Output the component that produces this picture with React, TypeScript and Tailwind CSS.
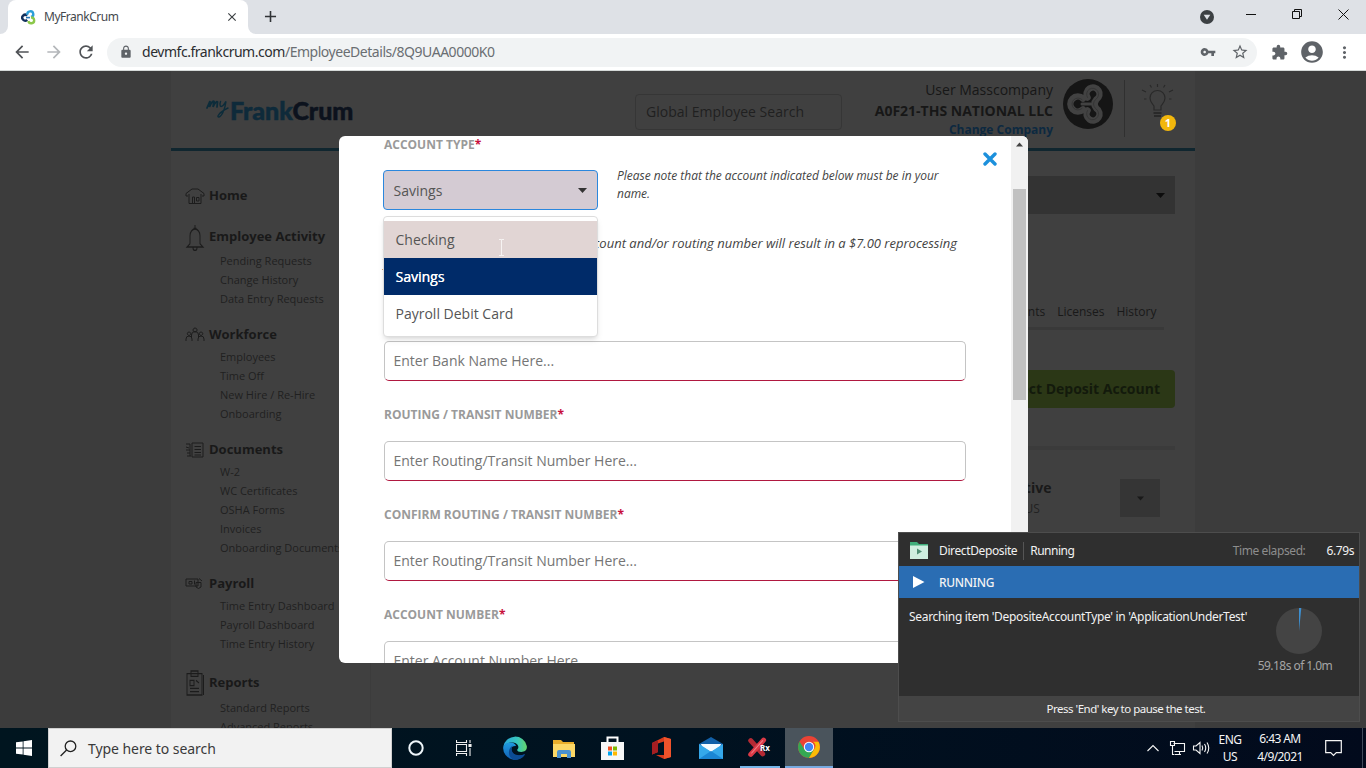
import React from "react";
import {
  MdArrowBack, MdArrowForward, MdRefresh, MdLock, MdVpnKey, MdStarBorder,
  MdExtension, MdAccountCircle, MdMoreVert, MdClose, MdAdd,
} from "react-icons/md";

const OPEN = "font-['Open_Sans','Noto_Sans',sans-serif]";

/* ---------- Browser chrome ---------- */

function Favicon() {
  return (
    <svg width="15" height="15" viewBox="0 0 15 15" fill="none" strokeWidth="2.4">
      <path d="M6.2 5.6A2.9 2.9 0 1 0 6.2 9.8" stroke="#12305c" />
      <path d="M6.5 4.8A2.9 2.9 0 1 1 10 7" stroke="#2c9fd8" />
      <path d="M10 7.5A2.9 2.9 0 1 1 7.4 11" stroke="#8cc84b" />
      <path d="M5 7.6H9" stroke="#2776b8" strokeWidth="1.6" />
    </svg>
  );
}

function TitleBar() {
  return (
    <div className="flex h-[34px] shrink-0 bg-[#dee1e6]">
      <div className="flex w-2 items-end bg-white">
        <div className="h-full w-2 rounded-br-lg bg-[#dee1e6]" />
      </div>
      <div className="flex w-[240px] items-center rounded-t-lg bg-white pl-[13px] pr-[9px]">
        <Favicon />
        <span className="ml-[8px] grow text-[12px] tracking-[-0.48px] text-[#45494d]">MyFrankCrum</span>
        <MdClose size={14} className="text-[#3c4043]" />
      </div>
      <div className="w-2 bg-white">
        <div className="h-full w-2 rounded-bl-lg bg-[#dee1e6]" />
      </div>
      <MdAdd size={19} className="ml-[5px] mt-[7px] text-[#303336]" />
      <div className="grow" />
      <svg width="14" height="14" viewBox="0 0 14 14" className="mr-[32px] mt-[10px]">
        <circle cx="7" cy="7" r="7" fill="#3c4043" />
        <path d="M3.7 4.8h6.6L7 9.8z" fill="#dee1e6" />
      </svg>
      <svg width="120" height="20" viewBox="0 0 120 20" fill="none" stroke="#111" className="mt-[5px]">
        <path d="M0 9.5h10" />
        <path d="M46.500 6.500h7v7h-7zM48.500 6.500v-2h7v7h-2" />
        <path d="M92.500 4.500l10 10M102.500 4.500l-10 10" />
      </svg>
    </div>
  );
}

function Toolbar() {
  return (
    <div className="flex h-[37px] shrink-0 items-center border-b border-[#d5d9d8] bg-white pl-[12px] text-[#5f6368]">
      <MdArrowBack size={20} className="text-[#505357]" />
      <MdArrowForward size={20} className="ml-[12px] text-[#b4b7ba]" />
      <MdRefresh size={20} className="ml-[12px] text-[#505357]" />
      <div className="ml-[11px] flex h-[29px] w-[1150px] items-center rounded-full bg-[#f1f3f4] pl-[12px] pr-[8px]">
        <MdLock size={14} />
        <span className="-mt-px ml-[9px] grow text-[14px] tracking-[-0.47px] text-[#6a6e72]">
          <span className="text-[#2b2d30]">devmfc.frankcrum.com</span>/EmployeeDetails/8Q9UAA0000K0
        </span>
        <MdVpnKey size={16} />
        <MdStarBorder size={18} className="ml-[15px]" />
      </div>
      <MdExtension size={17} className="ml-[14px]" />
      <MdAccountCircle size={26} className="ml-[11px]" />
      <MdMoreVert size={19} className="ml-[10px]" />
    </div>
  );
}

/* ---------- Dimmed page ---------- */

function PageHeader() {
  return (
    <div className="flex h-[80px] shrink-0 border-b-[3px] border-[#10262f]">
      <div className="flex pl-[35px] pt-[24px]">
        <svg width="24" height="26" viewBox="0 0 24 26" fill="none" stroke="#0d2c3a" strokeWidth="1.8" strokeLinecap="round">
          <path d="M1 13L4 6L3.500 12C5 8 7 5.500 8 6.500L7 12C8.500 8 10.500 6 11.500 7L11 12" />
          <path d="M14.500 6.500C13 11 14.500 13 17.500 10L20 6.500C19 14 16 21 13 22C10.500 22.500 12 18 22 13" strokeWidth="1.4" />
        </svg>
        <span className="mt-[-2px] font-['Lato',sans-serif] text-[25px] font-black leading-[34px] tracking-[-0.05px] text-[#0e2a3a] [-webkit-text-stroke:0.5px_currentColor]">
          Frank<span className="text-[#0c121d]">Crum</span>
        </span>
      </div>
      <div className="grow" />
      <div className="mt-[23px] flex h-[36px] w-[207px] items-center rounded-[4px] border border-[#363636] pb-[2px] pl-[10px] text-[14px] tracking-[0.02px] text-[#202020]">
        Global Employee Search
      </div>
      <div className="mt-[8px] w-[211px] text-right text-[14px] leading-[21px] text-[#171717]">
        <div className="tracking-[0px]">User Masscompany</div>
        <div className="font-bold tracking-[0px]">A0F21-THS NATIONAL LLC</div>
        <div className="text-[12px] font-bold leading-[18px] text-[#0d2940]">Change Company</div>
      </div>
      <svg width="50" height="50" viewBox="0 0 50 50" className="ml-[10px] mt-[8px]" fill="none" strokeLinecap="round">
        <circle cx="25" cy="25" r="25" fill="#151515" />
        <path d="M20 19.500A7.500 7.500 0 1 0 20 30.500M24.500 18.500A6.500 6.500 0 1 1 33.500 20.500Q29.500 25 33.500 29.500A6.500 6.500 0 1 1 24.500 31.500" stroke="#424242" strokeWidth="6.500" />
        <path d="M19 20.500A6 6 0 1 0 19 29.500M24.500 18.500A6 6 0 1 1 32.500 20.500Q28.500 25 32.500 29.500A6 6 0 1 1 24.500 31.500" stroke="#353535" strokeWidth="1" />
        <path d="M19 25H28" stroke="#424242" strokeWidth="3" />
      </svg>
      <div className="ml-[11px] mt-[9px] h-[57px] w-px bg-[#303030]" />
      <div className="relative mr-[20px] w-[50px]">
        <svg width="34" height="38" viewBox="0 0 34 38" className="ml-[16px] mt-[12px]" fill="none" stroke="#292929" strokeWidth="1.200">
          <path d="M13 27v-4c-1.500-2.500-4-4-4-8a7.500 7.500 0 0 1 15 0c0 4-2.500 5.500-4 8v4z" />
          <path d="M12.500 30h8M13 33h7" strokeWidth="2" />
          <path d="M16.500 1v3M9 2l1.500 2.500M24 2l-1.500 2.500M1 7l4 2M32 7l-4 2M3 16h2.500M28 16h2.500" />
        </svg>
        <div className="absolute left-[35px] top-[44px] flex size-[16px] items-center justify-center rounded-full bg-[#f2b70c] text-[11px] font-bold text-white">1</div>
      </div>
    </div>
  );
}

const icons: Record<string, React.ReactNode> = {
  Home: <path d="M0 6.500L6 2h6l6 4.500V9h-2M0 6.500V9h2M3 7v9.500h12V7M6.500 16v-6h2v6M10.500 10.500h2.500v3.500h-2.500z" />,
  "Employee Activity": <path d="M9 0v3M7.500 2.500h3M4 14V8a5 5 0 0 1 10 0v6l3 2.500H1L4 14M7 17a2 2 0 0 0 4 0" />,
  Workforce: (
    <path d="M9 2a2 2 0 1 0 .1 0M5.500 12V9a3.500 3.500 0 0 1 7 0v3M3 6a1.700 1.700 0 1 0 .1 0M0 15v-2a3 3 0 0 1 6 0v2M15 6a1.700 1.700 0 1 0 .1 0M12 15v-2a3 3 0 0 1 6 0v2" />
  ),
  Documents: <path d="M6 2h11v14H6zM8.500 5.500H15M8.500 8.500H15M8.500 11.500H15M8.500 14H15M0 3h4M0 6l3 1M0 9h4M1 12h3M1 15h4M4 3v12" />,
  Payroll: <path d="M0 4h12v7H0zM3 6.500h3v2.500H3zM8.500 5.500v4M10 7.500h5v4.500l-2.500 1.500L10 12zM13 3.500l3 2.500" />,
  Reports: <path d="M1 2h15v16H1zM5 0h7v4H5zM17.500 3v15M4 7h4v4H4zM10 7l3 2M4 13h9M4 15.500h9" />,
};

function Section({ title, items = [], className = "" }: { title: string; items?: string[]; className?: string }) {
  return (
    <div className={className}>
      <div className="flex h-[28px] items-center pl-[15px]">
        <svg
          width="18" height={title === "Reports" || title === "Employee Activity" ? 24 : 18}
          viewBox="0 0 18 18" preserveAspectRatio="none" fill="none" stroke="#1c1c1c" className="overflow-visible"
        >
          {icons[title]}
        </svg>
        <span className="ml-[5px] text-[13px] font-bold text-[#191919]">{title}</span>
      </div>
      {items.map((t) => (
        <div key={t} className="h-[19px] whitespace-nowrap pl-[49px] text-[11px] leading-[19px] text-[#202020]">{t}</div>
      ))}
    </div>
  );
}

function Sidebar() {
  return (
    <div className="w-[200px] shrink-0 border-r border-[#3c3c3c] pt-[31px]">
      <Section title="Home" />
      <Section className="mt-[13px]" title="Employee Activity" items={["Pending Requests", "Change History", "Data Entry Requests"]} />
      <Section className="mt-[13px] [&>*:first-child]:-mb-[2px]" title="Workforce" items={["Employees", "Time Off", "New Hire / Re-Hire", "Onboarding"]} />
      <Section className="mt-[13px] [&>*:first-child]:-mb-[2px]" title="Documents" items={["W-2", "WC Certificates", "OSHA Forms", "Invoices", "Onboarding Documents"]} />
      <Section className="mt-[13px] [&>*:first-child]:-mb-[2px]" title="Payroll" items={["Time Entry Dashboard", "Payroll Dashboard", "Time Entry History"]} />
      <Section className="mt-[16px] [&>*:first-child]:mb-[1px]" title="Reports" items={["Standard Reports", "Advanced Reports"]} />
    </div>
  );
}

function Caret({ className = "w-[9px]" }: { className?: string }) {
  return (
    <svg height="5" viewBox="0 0 9 5" className={className}>
      <path d="M0 0h9L4.500 5z" fill="currentColor" />
    </svg>
  );
}

function Details() {
  return (
    <div className="flex grow flex-col items-end pr-[20px] pt-[25px] text-[#191919]">
      <div className="flex h-[38px] w-[780px] items-center justify-end bg-[#333] pr-[10px]">
        <Caret className="w-[9px] text-[#0c0c0c]" />
      </div>
      <div className="mr-[11px] mt-[88px] flex h-[28px] w-[769px] justify-end gap-[12px] border-b-[3px] border-[#393939] pr-[7.500px] text-[12px] leading-[20px]">
        <span>Documents</span><span>Licenses</span><span>History</span>
      </div>
      <div className="mt-[40px] flex h-[38px] items-center rounded-[4px] bg-[#2b3716] pb-px pl-[20px] pr-[15px] text-[14px] font-bold text-[#131a0c]">
        Add Direct Deposit Account
      </div>
      <div className="mt-[38px] h-[4px] w-[780px] bg-[#3b3b3b]" />
      <div className="mt-[27px] flex w-full items-center justify-end pr-[15px]">
        <div className="w-[96px] text-left leading-[21px]">
          <div className="pl-[11px] text-[14px] font-bold">Active</div>
          <div className="text-[12px] text-[#222]">STATUS</div>
        </div>
        <div className="ml-[27px] flex h-[38px] w-[40px] items-center justify-center bg-[#353535]">
          <Caret className="w-[7px]" />
        </div>
      </div>
    </div>
  );
}

/* ---------- Dialog ---------- */

function Label({ children, className = "" }: { children: string; className?: string }) {
  return (
    <div className={`h-[18px] shrink-0 text-[12px] font-bold leading-[20px] text-[#9a9a9a] ${className}`}>
      {children}<span className="text-[#c8103c]">*</span>
    </div>
  );
}

function Field({ placeholder }: { placeholder: string }) {
  return (
    <div className="flex h-[40px] w-[582px] shrink-0 items-center rounded-[5px] border border-[#c4c4c4] border-b-[#b01840] pb-[2px] pl-[8.500px] text-[14px] text-[#757575]">
      {placeholder}
    </div>
  );
}

function Dialog() {
  return (
    <div className="absolute left-[339px] top-[136px] flex h-[527px] w-[689px] overflow-hidden rounded-[6px] bg-white">
      <div className="flex grow flex-col pl-[45px]">
        <Label className="-mt-px">ACCOUNT TYPE</Label>
        <div className="mt-[17px] flex shrink-0">
          <div className="relative -ml-px h-[40px] w-[215px] shrink-0">
            <div className="flex h-full items-center justify-between rounded-[4px] border border-[#2b87dd] bg-[#d4cbd3] pl-[9.500px] pr-[10px] text-[14px] text-[#555]">
              Savings
              <Caret className="w-[9px] text-[#333]" />
            </div>
            <div className="absolute left-0 top-[46px] z-10 h-[121px] w-[215px] rounded-[4px] border border-[#ddd] bg-white pt-[4px] text-[14px] leading-[37px] text-[#555] shadow-md">
              <div className="flex h-[37px] items-center bg-[#e1d5d4] pl-[11.500px]">
                Checking
                <svg width="7" height="17" viewBox="0 0 7 17" className="ml-[43px] mt-[16px]" fill="none" stroke="#fff">
                  <path d="M1 .5h2.500M3.500 .5H6M3.500 1v15M1 16.500h5" opacity=".7" />
                </svg>
              </div>
              <div className="h-[37px] bg-[#002b69] pl-[11.500px] text-white [text-shadow:0.3px_0_0_white]">Savings</div>
              <div className="h-[37px] pl-[11.500px]">Payroll Debit Card</div>
            </div>
          </div>
          <p className="ml-[19px] mt-[-3px] w-[345px] text-[12px] italic leading-[18px] tracking-[-0.02px] text-[#444]">
            Please note that the account indicated below must be in your name.
          </p>
        </div>
        <div className="mt-[23px] h-[48px] w-[573px] shrink-0 text-[13px] italic leading-[21px] text-[#444]">
          <div className="text-right">account and/or routing number will result in a $7.00 reprocessing</div>
          <div className="-mt-[2px]">fee.</div>
        </div>
        <div className="mt-[60px] shrink-0"><Field placeholder="Enter Bank Name Here..." /></div>
        <Label className="mb-[18px] mt-[24px]">ROUTING / TRANSIT NUMBER</Label>
        <Field placeholder="Enter Routing/Transit Number Here..." />
        <Label className="mb-[18px] mt-[24px]">CONFIRM ROUTING / TRANSIT NUMBER</Label>
        <Field placeholder="Enter Routing/Transit Number Here..." />
        <Label className="mb-[18px] mt-[24px]">ACCOUNT NUMBER</Label>
        <Field placeholder="Enter Account Number Here..." />
      </div>
      <svg width="14" height="14" viewBox="0 0 14 14" className="absolute left-[644px] top-[15.500px]" stroke="#1c90dc" strokeWidth="3.400" strokeLinecap="round">
        <path d="M2 2l10 10M12 2L2 12" />
      </svg>
      <div className="flex w-[17px] shrink-0 flex-col items-center bg-[#f1f1f1]">
        <Caret className="mt-[6px] w-[7px] rotate-180 text-[#444]" />
        <div className="mt-[42px] h-[211px] w-[13px] bg-[#c1c1c1]" />
      </div>
    </div>
  );
}

/* ---------- Test runner overlay ---------- */

function Runner() {
  return (
    <div className="absolute left-[898px] top-[532px] flex h-[190px] w-[462px] flex-col border border-[#4d4d4d] bg-[#2f2f2f] font-['Noto_Sans',sans-serif] text-[12px] text-[#f2f2f2]">
      <div className="flex h-[33px] items-center pl-[11px] pr-[5px] pt-[2px]">
        <svg width="18" height="17" viewBox="0 0 18 17">
          <path d="M0 0h7l2 2h9v15H0z" fill="#3fae7b" />
          <path d="M0 3.500h18V17H0z" fill="#cfeee0" />
          <path d="M7 6.500v6l5-3z" fill="#4f8f75" />
        </svg>
        <span className="ml-[11px] tracking-[-0.38px]">DirectDeposite</span>
        <div className="ml-[6px] h-[18px] w-px bg-[#555]" />
        <span className="ml-[6px] tracking-[-0.5px]">Running</span>
        <span className="ml-auto tracking-[-0.4px] text-[#8d8d8d]">Time elapsed:</span>
        <span className="ml-[21px] tracking-[-0.4px]">6.79s</span>
      </div>
      <div className="flex h-[32px] items-center bg-[#2a6db3] pl-[14px]">
        <svg width="12" height="12" viewBox="0 0 12 12"><path d="M0 0l11.500 6L0 12z" fill="#fff" /></svg>
        <span className="ml-[14px] pt-[2px] font-medium tracking-[-0.3px]">RUNNING</span>
      </div>
      <div className="flex h-[98px] justify-between pl-[10px] pr-[22px] pt-[10px]">
        <span className="tracking-[-0.32px]">Searching item 'DepositeAccountType' in 'ApplicationUnderTest'</span>
        <div className="flex w-[76px] flex-col items-center">
          <svg width="46" height="46" viewBox="0 0 46 46">
            <circle cx="23" cy="23" r="23" fill="#444" />
            <path d="M23 23V0h2.300z" fill="#3d8fd0" />
          </svg>
          <span className="-ml-[8px] mt-[3px] whitespace-nowrap tracking-[-0.55px] text-[#a5a5a5]">59.18s of 1.0m</span>
        </div>
      </div>
      <div className="flex grow items-center justify-center bg-[#444] pr-[6px] text-[11.500px] tracking-[-0.5px]">Press 'End' key to pause the test.</div>
    </div>
  );
}

/* ---------- Taskbar ---------- */

function Taskbar() {
  return (
    <div className="flex h-[40px] shrink-0 bg-gradient-to-r from-[#00151f] via-[#001220] to-[#020a1c] font-['Noto_Sans',sans-serif]">
      <div className="flex w-[48px] items-center justify-center">
        <svg width="16" height="16" viewBox="0 0 16 16" fill="#fff">
          <path d="M0 2.300L6.700 1.400V7.600H0zM7.500 1.200L16 0V7.600H7.500zM0 8.400h6.700v6.200L0 13.700zM7.500 8.400H16V16l-8.500-1.200z" />
        </svg>
      </div>
      <div className="flex w-[344px] items-center border border-[#d0d0d0] bg-[#f2f2f2] pl-[11px]">
        <svg width="17" height="17" viewBox="0 0 17 17" fill="none" stroke="#222" strokeWidth="1.300">
          <circle cx="10.500" cy="6.300" r="5.300" /><path d="M6.600 10L.6 16" />
        </svg>
        <span className="ml-[11px] text-[14px] tracking-[-0.06px] text-[#3a3a3a]">Type here to search</span>
      </div>
      <div className="flex w-[48px] items-center justify-center">
        <svg width="16" height="16" viewBox="0 0 16 16"><circle cx="8" cy="8" r="6.700" fill="none" stroke="#eef6fa" strokeWidth="2" /></svg>
      </div>
      <div className="flex w-[48px] items-center justify-center">
        <svg width="16" height="16" viewBox="0 0 16 16" fill="none" stroke="#f0f0f0" strokeWidth="1.100">
          <path d="M.5 0v2.500h10V0M.5 4.500h10v7h-10zM.5 16v-2.500h10V16M14 0v3M14 8v8" /><path d="M13 4.500h2v2h-2z" fill="#fff" />
        </svg>
      </div>
      <div className="flex w-[53px] items-center justify-center">
        <svg width="24" height="24" viewBox="0 0 24 24">
          <defs>
            <linearGradient id="edgeTop" x1="0" x2="1"><stop offset="0" stopColor="#2aa6dc" /><stop offset=".6" stopColor="#37c6bd" /><stop offset="1" stopColor="#65d56b" /></linearGradient>
            <linearGradient id="edgeBody" x1="0" x2="0" y1="0" y2="1"><stop offset="0" stopColor="#1f9be0" /><stop offset="1" stopColor="#1260b5" /></linearGradient>
          </defs>
          <path d="M.2 11A12 12 0 0 1 23.800 10c.6 4-2 6-5.500 6-3 0-4.500-1-4-2.500.8-1 1.200-1.500 1-3C15 7.500 11 6 7.500 6.500 4 7 1.500 9 .2 11z" fill="url(#edgeTop)" />
          <path d="M.1 12C.5 8.500 4 6.500 7.500 6.500c3 0 5 1.500 5.500 3.500-5-.5-6 4-3.500 7 3 3.500 8 3 12.500 1.500A12 12 0 0 1 .1 12z" fill="url(#edgeBody)" />
          <path d="M10 9.500c-2.500 3-1.500 8 3 9.300 3 .9 6 .3 9-.9-2.500 5.500-10 7.500-14 4C4.500 18.500 5.500 11.500 10 9.500z" fill="#0c4c94" />
        </svg>
      </div>
      <div className="flex w-[46px] items-center justify-center">
        <svg width="22" height="19" viewBox="0 0 22 19">
          <path d="M0 1h8l2 2h11v14H0z" fill="#e9ae2b" /><path d="M0 5h22v13H0z" fill="#fcd866" />
          <path d="M4 19v-6q0-2 2-2h10q2 0 2 2v6h-4v-4H8v4z" fill="#4b91ce" />
        </svg>
      </div>
      <div className="flex w-[50px] items-center justify-center">
        <svg width="23" height="24" viewBox="0 0 23 24">
          <path d="M6.500 7V1.500h10V7" fill="none" stroke="#fff" strokeWidth="2" /><path d="M0 6h23v18H0z" fill="#f7f7f7" />
          <path d="M7 10.500h4v4H7z" fill="#f25022" /><path d="M12 10.500h4v4h-4z" fill="#7fba00" />
          <path d="M7 15.500h4v4H7z" fill="#00a4ef" /><path d="M12 15.500h4v4h-4z" fill="#ffb900" />
        </svg>
      </div>
      <div className="flex w-[49px] items-center justify-center">
        <svg width="19" height="22" viewBox="0 0 19 22">
          <path d="M0 6L12 0l7 2v18l-7 2-8-4h8V4.500L6 6.500V15l-6 2.500z" fill="#d83b1c" />
          <path d="M12 0l7 2v18l-7 2z" fill="#f0532b" /><path d="M0 6l6-3v12l-6 2.500z" fill="#a61e22" />
        </svg>
      </div>
      <div className="flex w-[49px] items-center justify-center">
        <svg width="24" height="22" viewBox="0 0 24 22">
          <path d="M0 7L12 0l12 7v4H0z" fill="#1260a8" /><path d="M2.500 7h19v7h-19z" fill="#f5fbff" />
          <path d="M0 7l12 7.500L24 7v15H0z" fill="#35a8ea" /><path d="M0 22L12 14l12 8z" fill="#1b86d4" />
          <path d="M1.500 7h21L12 14.500z" fill="#f5fbff" />
        </svg>
      </div>
      <div className="relative ml-[5px] mr-[5px] flex w-[40px] items-center justify-center border-b-2 border-[#76b5e8] pr-[2px]">
        <svg width="22" height="21" viewBox="0 0 24 22" strokeLinecap="round">
          <path d="M3 3.500l13 14.500" stroke="#b52a34" strokeWidth="5.500" /><path d="M17 3L3 18.500" stroke="#db3a46" strokeWidth="5.500" />
          <path d="M16 3.500L4 17" stroke="#ee7f86" strokeWidth="1.200" />
        </svg>
        <span className="absolute left-[20px] top-[14px] text-[8px] font-bold leading-[12px] text-white">Rx</span>
      </div>
      <div className="flex w-[48px] items-center justify-center border-b-2 border-[#76a9e0] bg-[#4a545c]">
        <svg width="22" height="22" viewBox="0 0 22 22">
          <circle cx="11" cy="11" r="11" fill="#ea4335" />
          <path d="M1.500 5.500A11 11 0 0 0 11 22l5-8.500H6.500z" fill="#34a853" />
          <path d="M20.500 5.700A11 11 0 0 1 11 22l5-8.500a5 5 0 0 0-1-7.800z" fill="#fbbc05" />
          <circle cx="11" cy="11" r="5.200" fill="#fff" /><circle cx="11" cy="11" r="4.200" fill="#4285f4" />
        </svg>
      </div>
      <div className="grow" />
      <svg width="66" height="20" viewBox="0 0 66 20" fill="none" stroke="#f5f5f5" strokeWidth="1.100" className="mr-[1px] mt-[10px]">
        <path d="M.5 13L6 7.500l5.500 5.500" />
        <path d="M26.500 5.500h11v8h-10M23.500 3.500h4v4h-4zM25.500 7.500v9h2M28 16.500h6M32.500 13.500v3" />
        <path d="M46.500 8h2.500l4-3.500v11L49 12h-2.500zM55 7.500q1.500 2.500 0 5M57.500 6q2.500 4 0 8M60 4.500q3.500 5.500 0 11" />
      </svg>
      <div className="w-[32px] pt-[3px] text-center text-[12px] leading-[17px] tracking-[-0.5px] text-[#f5f5f5]">ENG<br />US</div>
      <div className="ml-[4px] w-[60px] pt-[2px] text-center text-[12px] leading-[18px] tracking-[-0.6px] text-[#f5f5f5]">
        6:43 AM<br />4/9/2021
      </div>
      <svg width="17" height="18" viewBox="0 0 17 18" fill="none" stroke="#f5f5f5" strokeWidth="1.200" className="ml-[15px] mr-[20px] mt-[12px]">
        <path d="M.7 .7h15.600v12h-5L8.500 15.500 5.700 12.700h-5z" />
      </svg>
      <div className="mr-[3px] w-px bg-[#404a5a]" />
    </div>
  );
}

export default function App() {
  return (
    <div className={`relative flex h-[768px] w-[1366px] flex-col overflow-hidden bg-[#3c3c3c] ${OPEN}`}>
      <div className="shrink-0 font-['Noto_Sans',sans-serif]">
        <TitleBar />
        <Toolbar />
      </div>
      <div className="ml-[171px] flex h-[657px] w-[1024px] shrink-0 flex-col overflow-hidden bg-[#404040]">
        <PageHeader />
        <div className="flex grow">
          <Sidebar />
          <Details />
        </div>
      </div>
      <Taskbar />
      <Dialog />
      <Runner />
    </div>
  );
}
